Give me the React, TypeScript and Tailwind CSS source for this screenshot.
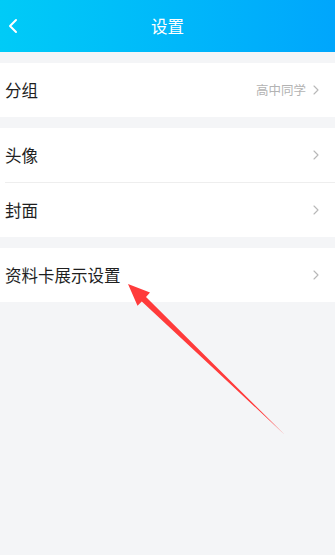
import { ChevronLeft, ChevronRight } from "lucide-react";

const font = { fontFamily: '"Noto Sans CJK SC", "Noto Sans", sans-serif' };

const Row = ({ label, value }: { label: string; value?: string }) => (
  <div className="flex items-center justify-between h-[54px] pl-[5px] pr-[11px] bg-white">
    <span className="text-[16.5px] text-[#1f1f1f]">{label}</span>
    <div className="flex items-center gap-[2px]">
      {value && <span className="text-[12.5px] text-[#b3b3b3]">{value}</span>}
      <ChevronRight className="w-[16px] h-[16px] text-[#b8b8b8]" strokeWidth={1.7} />
    </div>
  </div>
);

export default function App() {
  return (
    <div className="relative w-[335px] h-[555px] bg-[#f4f5f7] overflow-hidden" style={font}>
      {/* Header */}
      <div className="relative flex items-center justify-center h-[52px] bg-gradient-to-r from-[#00cbf7] to-[#00a6fc]">
        <ChevronLeft
          className="absolute left-[1px] top-[14px] w-[24px] h-[24px] text-white"
          strokeWidth={2}
        />
        <span className="text-[16.5px] text-white">设置</span>
      </div>

      <div className="flex flex-col gap-[11px] pt-[11px]">
        <Row label="分组" value="高中同学" />
        <div className="flex flex-col">
          <Row label="头像" />
          <div className="h-px bg-white pl-[5px]">
            <div className="h-px bg-[#eeeeee]" />
          </div>
          <Row label="封面" />
        </div>
        <Row label="资料卡展示设置" />
      </div>

      {/* annotation arrow */}
      <svg className="absolute inset-0 pointer-events-none" width="335" height="555">
        <polygon
          points="128,284 150,292.5 146,297 285,435 141.8,301.4 137.5,305.7"
          fill="#ff3b3b"
        />
      </svg>
    </div>
  );
}
